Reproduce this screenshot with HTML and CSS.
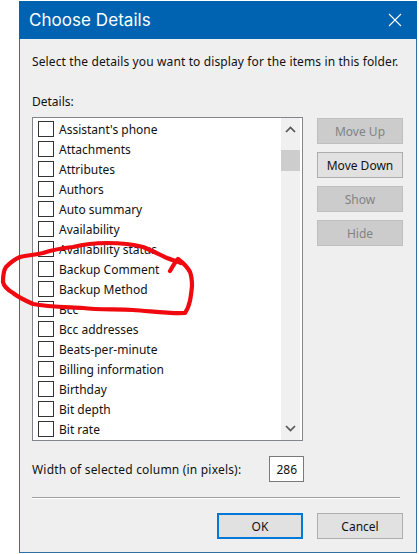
FILE: index.html
```html
<!DOCTYPE html>
<html lang="en">
<head>
<meta charset="utf-8">
<title>Choose Details</title>
<link rel="stylesheet" href="styles.css">
</head>
<body>
<div class="dialog">
  <header class="titlebar">
    <span class="title">Choose Details</span>
    <svg class="close" width="14" height="14" viewBox="0 0 14 14"><path d="M1 1 L13 13 M13 1 L1 13" stroke="#fff" stroke-width="1.1" fill="none"/></svg>
  </header>
  <div class="content">
    <p class="intro">Select the details you want to display for the items in this folder.</p>
    <div class="details-label">Details:</div>
    <div class="main">
      <div class="listbox">
        <ul class="items">
          <li><span class="check"></span>Assistant's phone</li>
          <li><span class="check"></span>Attachments</li>
          <li><span class="check"></span>Attributes</li>
          <li><span class="check"></span>Authors</li>
          <li><span class="check"></span>Auto summary</li>
          <li><span class="check"></span>Availability</li>
          <li><span class="check"></span>Availability status</li>
          <li><span class="check"></span>Backup Comment</li>
          <li><span class="check"></span>Backup Method</li>
          <li><span class="check"></span>Bcc</li>
          <li><span class="check"></span>Bcc addresses</li>
          <li><span class="check"></span>Beats-per-minute</li>
          <li><span class="check"></span>Billing information</li>
          <li><span class="check"></span>Birthday</li>
          <li><span class="check"></span>Bit depth</li>
          <li><span class="check"></span>Bit rate</li>
        </ul>
        <div class="scrollbar">
          <svg class="arrow" width="11" height="7" viewBox="0 0 11 7"><path d="M1 6 L5.5 1.5 L10 6" stroke="#555" stroke-width="1.7" fill="none"/></svg>
          <div class="thumb"></div>
          <svg class="arrow arrow-down" width="11" height="7" viewBox="0 0 11 7"><path d="M1 1 L5.5 5.5 L10 1" stroke="#555" stroke-width="1.7" fill="none"/></svg>
        </div>
      </div>
      <div class="side">
        <button class="btn disabled">Move Up</button>
        <button class="btn">Move Down</button>
        <button class="btn disabled">Show</button>
        <button class="btn disabled">Hide</button>
      </div>
    </div>
    <div class="width-row">
      <span class="width-label">Width of selected column (in pixels):</span>
      <span class="width-input">286</span>
    </div>
    <div class="separator"></div>
    <div class="footer">
      <button class="btn primary">OK</button>
      <button class="btn">Cancel</button>
    </div>
  </div>
</div>
<svg class="scribble" width="419" height="554" viewBox="0 0 419 554"><path d="M170 271 C173 266 175 262 178 259 C182 262 187 266 190 272 C192 277 192 281 192 286 C191 296 190 306 185 313 C170 314 150 311 133 310 C115 309 98 310 83 308 C65 307 48 307 33 304 C24 300 18 297 13 293 C8 290 4 287 3 282 C3 275 4 270 6 267 C11 262 15 259 20 257 C28 255 35 255 43 253 C55 249 63 248 73 247 C85 244 96 243 107 243 C120 243 132 244 143 247 C153 251 160 255 167 258 C172 260 176 261 181 263" fill="none" stroke="#f00a0f" stroke-width="4.2" stroke-linecap="round" stroke-linejoin="round"/></svg>
</body>
</html>
```
FILE: styles.css
```css
html, body {
  margin: 0;
  padding: 0;
  background: #fff;
  height: 554px;
  overflow: hidden;
}
.dialog {
  box-sizing: border-box;
  width: 398px;
  height: 552px;
  margin: 1px 0 0 19px;
  background: #efefef;
  border: 1px solid #2f6fa8;
  border-top: 0;
  font-family: "Noto Sans", "Open Sans", sans-serif;
  font-size: 12px;
  color: #111;
}
.titlebar {
  height: 38px;
  margin: 0 -1px;
  background: #0063b1;
  display: flex;
  align-items: center;
  justify-content: space-between;
  padding: 0 15px 0 10px;
}
.title {
  color: #fff;
  font-family: "Inter", sans-serif;
  font-size: 17px;
  letter-spacing: 0.05px;
}
.close { display: block; }
.content {
  padding: 0 12px;
  display: flex;
  flex-direction: column;
}
.intro {
  margin: 13px 0 0;
  height: 20px;
  line-height: 20px;
  white-space: nowrap;
  letter-spacing: 0.12px;
}
.details-label {
  margin-top: 20px;
  height: 20px;
  line-height: 20px;
  margin-bottom: 5px;
}
.main {
  display: flex;
  gap: 14px;
  align-items: flex-start;
}
.listbox {
  box-sizing: border-box;
  width: 271px;
  height: 324px;
  border: 1px solid #82868c;
  background: #fff;
  display: flex;
}
.items {
  list-style: none;
  margin: 1px 0 0;
  padding: 0;
  flex: 1;
  overflow: hidden;
}
.items li {
  height: 20px;
  display: flex;
  align-items: center;
  padding-left: 5px;
  white-space: nowrap;
}
.check {
  box-sizing: border-box;
  width: 16px;
  height: 16px;
  border: 1px solid #333;
  background: #fff;
  margin-right: 5px;
  flex: none;
}
.scrollbar {
  width: 19px;
  background: #f0f0f0;
  margin-right: 2px;
  display: flex;
  flex-direction: column;
  align-items: center;
}
.arrow { margin-top: 8px; flex: none; }
.arrow-down { margin-top: auto; margin-bottom: 8px; }
.thumb {
  width: 19px;
  height: 21px;
  background: #cdcdcd;
  margin-top: 17px;
  flex: none;
}
.side {
  display: flex;
  flex-direction: column;
  gap: 8px;
  padding-top: 1px;
}
.btn {
  box-sizing: border-box;
  width: 86px;
  height: 26px;
  padding: 0;
  background: #e1e1e1;
  border: 1px solid #adadad;
  font-family: inherit;
  font-size: 12px;
  color: #111;
}
.btn.disabled {
  background: #cccccc;
  border-color: #bfbfbf;
  color: #838383;
}
.btn.primary {
  border: 2px solid #0078d7;
}
.width-row {
  display: flex;
  align-items: center;
  justify-content: space-between;
  margin-top: 15px;
  height: 26px;
  width: 272px;
}
.width-label { letter-spacing: 0.19px; }
.width-input {
  box-sizing: border-box;
  width: 35px;
  height: 26px;
  border: 1px solid #7a7a7a;
  background: #fff;
  display: flex;
  align-items: center;
  justify-content: flex-end;
  padding-right: 6px;
}
.separator {
  width: 368px;
  height: 1px;
  background: #a0a0a0;
  box-shadow: 0 1px 0 #fff;
  margin-top: 15px;
}
.footer {
  display: flex;
  justify-content: flex-end;
  gap: 14px;
  margin: 15px 0 0;
  width: 371px;
}
.scribble {
  position: absolute;
  top: 0;
  left: 0;
  pointer-events: none;
}
```
